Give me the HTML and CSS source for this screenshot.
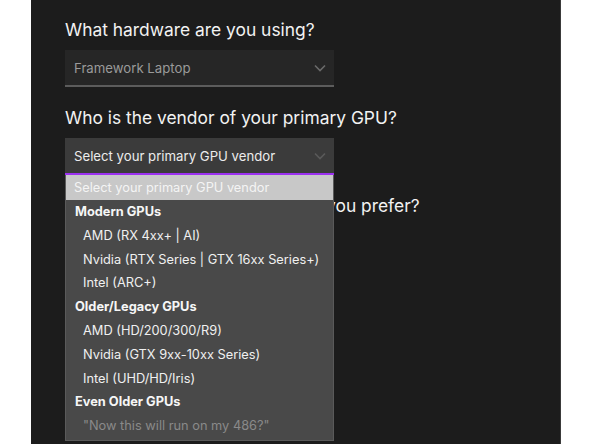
FILE: index.html
```html
<!DOCTYPE html>
<html>
<head>
<meta charset="utf-8">
<link rel="stylesheet" href="styles.css">
</head>
<body>
<div class="panel">
  <section class="field">
    <h2 class="question">What hardware are you using?</h2>
    <div class="select select-muted">
      <span class="select-value">Framework Laptop</span>
      <svg class="chev" width="12" height="8" viewBox="0 0 12 8"><path d="M1 1.5 L6 6.5 L11 1.5" fill="none" stroke="currentColor" stroke-width="1.6"/></svg>
    </div>
  </section>
  <section class="field">
    <h2 class="question">Who is the vendor of your primary GPU?</h2>
    <div class="select-wrap">
      <div class="select select-open">
        <span class="select-value">Select your primary GPU vendor</span>
        <svg class="chev" width="12" height="8" viewBox="0 0 12 8"><path d="M1 1.5 L6 6.5 L11 1.5" fill="none" stroke="currentColor" stroke-width="1.6"/></svg>
      </div>
      <ul class="listbox">
        <li class="opt opt-active">Select your primary GPU vendor</li>
        <li class="group">Modern GPUs</li>
        <li class="opt">AMD (RX 4xx+ | AI)</li>
        <li class="opt">Nvidia (RTX Series | GTX 16xx Series+)</li>
        <li class="opt">Intel (ARC+)</li>
        <li class="group">Older/Legacy GPUs</li>
        <li class="opt">AMD (HD/200/300/R9)</li>
        <li class="opt">Nvidia (GTX 9xx-10xx Series)</li>
        <li class="opt">Intel (UHD/HD/Iris)</li>
        <li class="group">Even Older GPUs</li>
        <li class="opt opt-disabled">"Now this will run on my 486?"</li>
      </ul>
    </div>
  </section>
  <section class="field">
    <h2 class="question">Which desktop environment do you prefer?</h2>
  </section>
</div>
</body>
</html>
```
FILE: styles.css
```css
html, body {
  margin: 0;
  padding: 0;
  background: #ffffff;
  height: 100%;
}
body {
  font-family: Inter, "Noto Sans", sans-serif;
}
.panel {
  margin-left: 31px;
  width: 530px;
  height: 444px;
  box-sizing: border-box;
  background: #1c1c1c;
  border-right: 1px solid #3a3a3a;
  padding: 18px 0 0 34px;
  overflow: hidden;
}
.field {
  margin-bottom: 19px;
}
.question {
  margin: 0 0 8px 0;
  font-size: 17.4px;
  line-height: 24px;
  font-weight: 400;
  color: #f2f2f2;
}
.select-wrap {
  position: relative;
  width: 269px;
}
.select {
  width: 269px;
  height: 37px;
  box-sizing: border-box;
  display: flex;
  align-items: center;
  justify-content: space-between;
  padding: 0 8px 0 9px;
  font-size: 13.2px;
}
.select-muted {
  background: #262626;
  border-bottom: 2px solid #5c5c5c;
  color: #9a9a9a;
}
.select-muted .chev {
  color: #6a6a6a;
}
.select-open {
  background: #3b3b3b;
  border-bottom: 2px solid #9b30f0;
  color: #ececec;
}
.select-open .chev {
  color: #5a5a5a;
}
.listbox {
  position: absolute;
  top: 100%;
  left: 0;
  width: 269px;
  box-sizing: border-box;
  margin: 0;
  padding: 0 0 2px 0;
  list-style: none;
  background: #494949;
  border: 1px solid #5a5a5a;
  border-top: none;
  font-size: 12.8px;
  z-index: 2;
}
.listbox li {
  height: 23.8px;
  line-height: 23.8px;
  white-space: nowrap;
}
.opt {
  padding-left: 17px;
  color: #f0f0f0;
}
.opt-active {
  height: 25px !important;
  line-height: 25px !important;
  padding-left: 8px;
  background: #c8c8c8;
  color: #f4f4f4;
}
.group {
  padding-left: 9px;
  font-weight: 700;
  color: #f6f6f6;
}
.opt-disabled {
  color: #8a8a8a;
}
```
